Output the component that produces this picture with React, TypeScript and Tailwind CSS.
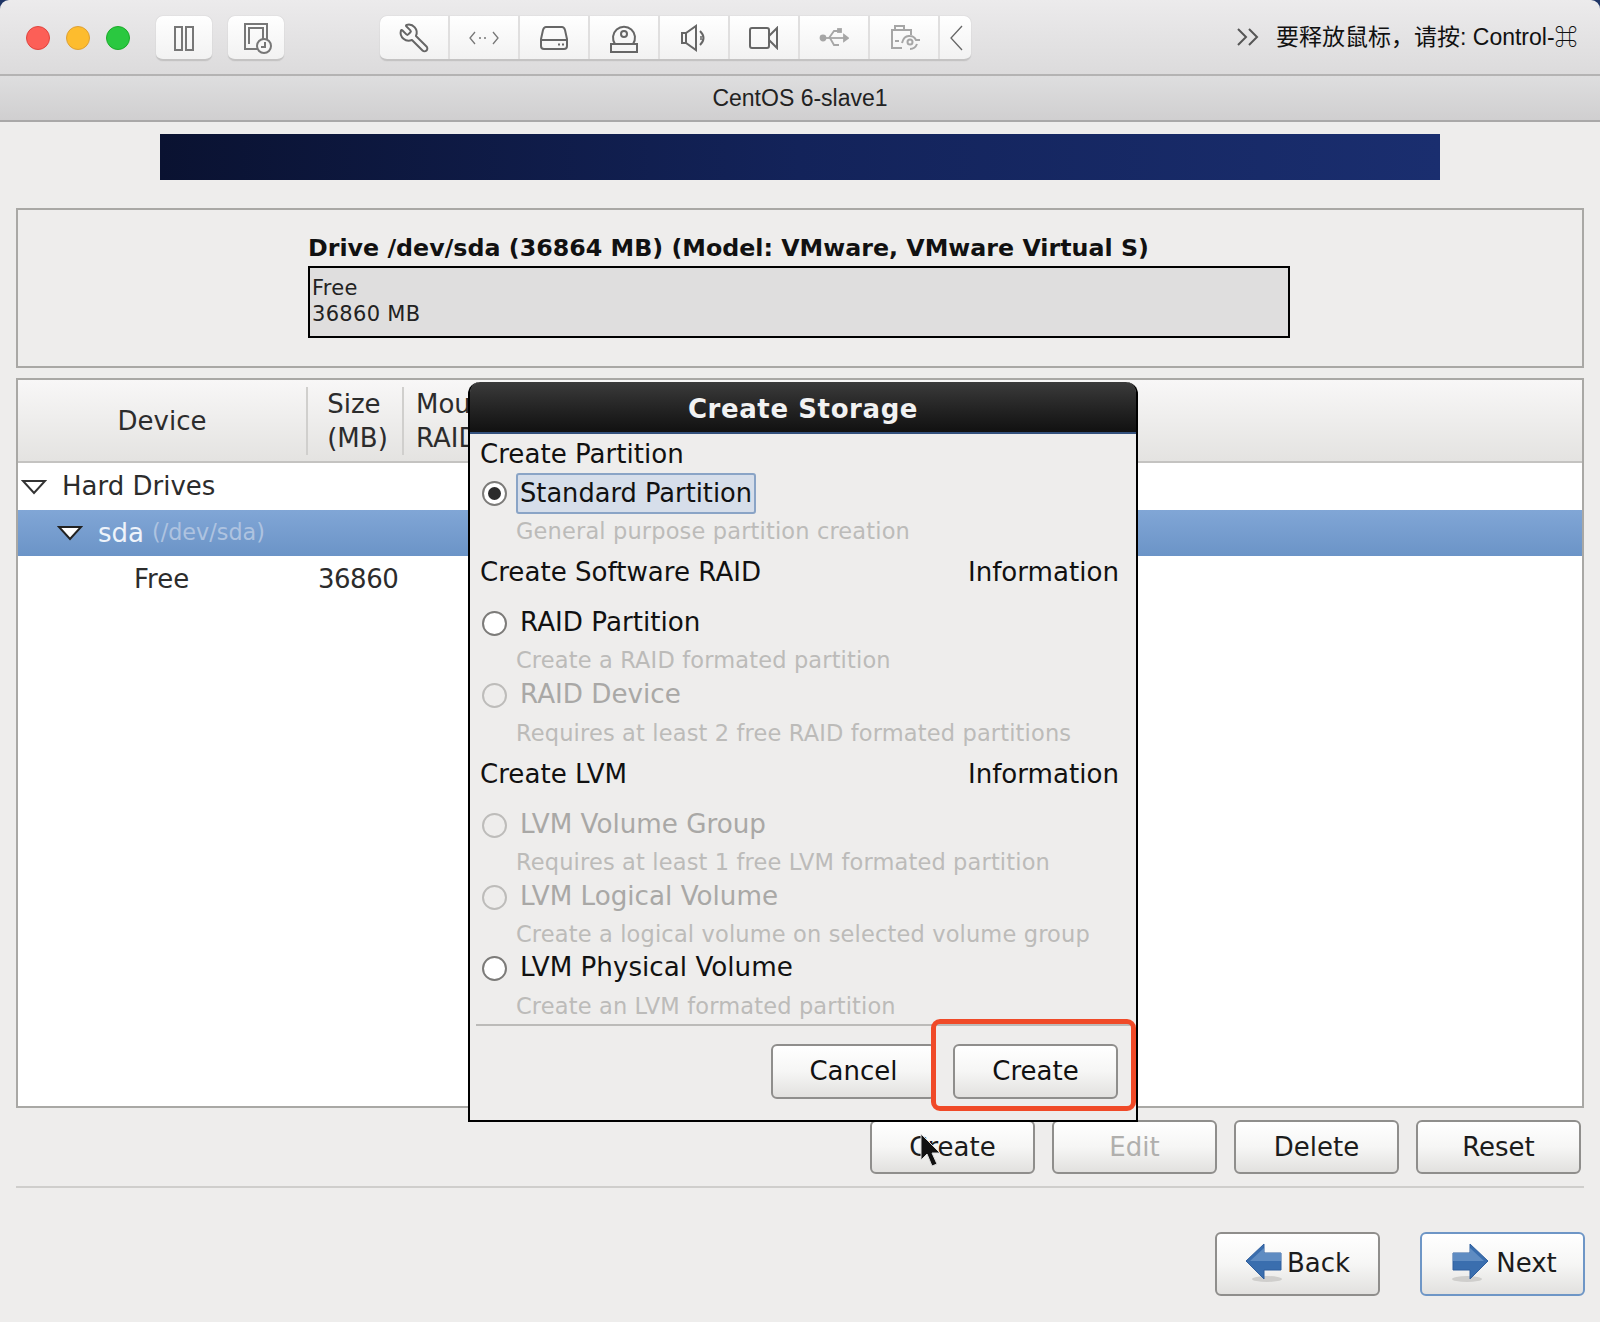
import { Wrench } from "lucide-react";
import type { ReactNode } from "react";

const sans = "font-['DejaVu_Sans',sans-serif]";

function Button({
  children,
  className = "",
  border = "border-[#8f8e8c]",
}: {
  children: ReactNode;
  className?: string;
  border?: string;
}) {
  return (
    <div
      className={`flex w-[165px] items-center justify-center rounded-[6px] border-2 ${border} bg-gradient-to-b from-white via-[#f6f6f5] to-[#e2e1df] text-[26px] text-[#1c1c1c] ${className}`}
    >
      {children}
    </div>
  );
}

function Radio({ checked, disabled }: { checked?: boolean; disabled?: boolean }) {
  return (
    <span
      className={`flex h-[25px] w-[25px] shrink-0 items-center justify-center rounded-full border-2 ${
        disabled ? "border-[#bdbcba] bg-[#eeedec]" : "border-[#7c7b79] bg-white"
      }`}
    >
      {checked && <span className="h-[13px] w-[13px] rounded-full bg-[#2b2b2b]" />}
    </span>
  );
}

function Option({ label, disabled, className }: { label: string; disabled?: boolean; className: string }) {
  return (
    <div className={`flex items-center gap-[13px] pl-[2px] ${className}`}>
      <Radio disabled={disabled} />
      <span className={`text-[26.2px] ${disabled ? "text-[#a9a8a6]" : "text-[#111]"}`}>{label}</span>
    </div>
  );
}

function Hint({ text, className }: { text: string; className: string }) {
  return <div className={`flex items-center pl-[36px] text-[22.5px] tracking-[0.15px] text-[#bcbbb9] ${className}`}>{text}</div>;
}

function Heading({ left, right, className }: { left: string; right?: string; className: string }) {
  return (
    <div className={`flex items-center justify-between pr-[17px] text-[26.1px] text-[#111] ${className}`}>
      <span>{left}</span>
      {right && <span>{right}</span>}
    </div>
  );
}

function ArrowIcon({ flip }: { flip?: boolean }) {
  return (
    <svg width="38" height="42" viewBox="0 0 38 42" className={flip ? "-scale-x-100" : ""}>
      <ellipse cx="22" cy="37" rx="15" ry="3" fill="#cfcecc" />
      <path d="M1 19 L19 2 V11 H36 V28 H19 V37 Z" fill="#3a6eae" stroke="#2f5f9e" />
      <path d="M19 11 H36 V19 H5 L19 6 Z" fill="#5f8cc2" />
    </svg>
  );
}

function ToolCell({ children, last }: { children: ReactNode; last?: boolean }) {
  return (
    <div className={`flex h-full w-[70px] items-center justify-center ${last ? "" : "border-r-2 border-[#e0dfdf]"}`}>
      {children}
    </div>
  );
}

export default function App() {
  return (
    <div className={`relative flex h-[1322px] w-[1600px] flex-col overflow-hidden bg-[#1f3566] ${sans}`}>
      {/* mac window toolbar */}
      <div className="flex h-[76px] shrink-0 items-start rounded-t-[9px] border-b-2 border-[#b4b3b3] bg-gradient-to-b from-[#ecebec] to-[#dcdbdc] pt-[16px]">
        <div className="ml-[26px] mt-[10px] flex gap-[16px]">
          <span className="h-[24px] w-[24px] rounded-full border border-[#e0443e] bg-[#fc5f57]" />
          <span className="h-[24px] w-[24px] rounded-full border border-[#dea034] bg-[#fdbc2e]" />
          <span className="h-[24px] w-[24px] rounded-full border border-[#1aab29] bg-[#2ac840]" />
        </div>
        <div className="ml-[26px] flex h-[45px] w-[56px] items-center justify-center rounded-[7px] border-b-2 border-[#c4c3c3] bg-gradient-to-b from-white to-[#f2f2f2] shadow-[0_0_1px_#aaa]">
          <svg width="24" height="26" viewBox="0 0 24 26" fill="none" stroke="#777" strokeWidth="2">
            <rect x="3" y="2" width="7" height="23" />
            <rect x="14" y="2" width="7" height="23" />
          </svg>
        </div>
        <div className="ml-[16px] flex h-[45px] w-[56px] items-center justify-center rounded-[7px] border-b-2 border-[#c4c3c3] bg-gradient-to-b from-white to-[#f2f2f2] shadow-[0_0_1px_#aaa]">
          <svg width="30" height="32" viewBox="0 0 30 32" fill="none" stroke="#777" strokeWidth="2" className="ml-[3px]">
            <path d="M14 27 H2 V2 H24 V17" />
            <path d="M6 22 V6 H20 V17" />
            <circle cx="21" cy="24" r="7" fill="#f8f8f8" />
            <path d="M22 20 V25 H18" />
          </svg>
        </div>
        <div className="ml-[96px] flex h-[45px] w-[591px] rounded-[7px] border-b-2 border-[#c4c3c3] bg-gradient-to-b from-white to-[#f2f2f2] shadow-[0_0_1px_#aaa]">
          <ToolCell>
            <Wrench size={32} color="#666" strokeWidth={1.5} className="-scale-x-100" />
          </ToolCell>
          <ToolCell>
            <svg width="32" height="16" viewBox="0 0 32 16" fill="none" stroke="#777" strokeWidth="1.3">
              <path d="M7 2 L2 8 L7 14 M25 2 L30 8 L25 14" />
              <path d="M11 8 H21" strokeDasharray="2 3" />
            </svg>
          </ToolCell>
          <ToolCell>
            <svg width="30" height="26" viewBox="0 0 30 26" fill="none" stroke="#666" strokeWidth="2">
              <path d="M7 2 H23 Q25 2 26 5 L28 14 V21 Q28 24 25 24 H5 Q2 24 2 21 V14 L4 5 Q5 2 7 2 Z M2 15 H28" />
              <path d="M19 19.5 H21 M23 19.5 H25" />
            </svg>
          </ToolCell>
          <ToolCell>
            <svg width="28" height="30" viewBox="0 0 28 30" fill="none" stroke="#666" strokeWidth="2">
              <path d="M5 21 A 11 11 0 1 1 23 21" />
              <circle cx="14" cy="11" r="3" />
              <rect x="1" y="21" width="26" height="8" />
            </svg>
          </ToolCell>
          <ToolCell>
            <svg width="28" height="28" viewBox="0 0 28 28" fill="none" stroke="#666" strokeWidth="2">
              <path d="M2 9 H6 L16 2 V26 L6 19 H2 Z" />
              <path d="M6 9 V19 M20 7 Q27 14 20 21" />
              <path d="M21 12 V16" strokeWidth="1.5" />
            </svg>
          </ToolCell>
          <ToolCell>
            <svg width="30" height="24" viewBox="0 0 30 24" fill="none" stroke="#666" strokeWidth="2">
              <rect x="1" y="2" width="19" height="20" rx="2" />
              <path d="M20 10 L28 2 V22 L20 14" />
            </svg>
          </ToolCell>
          <ToolCell>
            <svg width="30" height="22" viewBox="0 0 30 22" fill="none" stroke="#a6a6a6" strokeWidth="1.8">
              <circle cx="4" cy="11" r="2.5" fill="#a6a6a6" />
              <path d="M6 11 H26" />
              <path d="M10 11 L15 4 H19 M11 11 L15 18 H20" />
              <path d="M25 8 L29 11 L25 14 Z" fill="#a6a6a6" />
              <rect x="19" y="2" width="3" height="3" fill="#a6a6a6" />
            </svg>
          </ToolCell>
          <ToolCell>
            <svg width="32" height="28" viewBox="0 0 32 28" fill="none" stroke="#a6a6a6" strokeWidth="2" className="ml-[3px]">
              <path d="M12 24 H2 V6 H5 V2 H14 V6 H21 V11" />
              <path d="M5 6 H14" />
              <path d="M5 17 H9" />
              <circle cx="20" cy="18" r="2.5" />
              <path d="M12 19 Q14 11 20 12 Q24 12 26 16 H30 M27 20 Q25 25 20 25" />
            </svg>
          </ToolCell>
          <div className="flex h-full flex-1 items-center justify-center">
            <svg width="14" height="28" viewBox="0 0 14 28" fill="none" stroke="#666" strokeWidth="1.3">
              <path d="M13 2 L2 14 L13 26" />
            </svg>
          </div>
        </div>
        <div className="ml-[265px] mt-[4px] flex items-center">
          <svg width="24" height="20" viewBox="0 0 24 20" fill="none" stroke="#555" strokeWidth="2">
            <path d="M2 2 L10 10 L2 18 M13 2 L21 10 L13 18" />
          </svg>
          <span className="ml-[16px] font-['Liberation_Sans','Noto_Sans_CJK_SC',sans-serif] text-[23px] text-[#111] whitespace-nowrap">
            要释放鼠标，请按: Control-⌘
          </span>
        </div>
      </div>

      {/* vm title */}
      <div className="flex h-[46px] shrink-0 items-center justify-center border-b-2 border-[#a9a8a8] bg-gradient-to-b from-[#dededf] to-[#d0cfd0] font-['Liberation_Sans',sans-serif] text-[23px] text-[#222]">
        CentOS 6-slave1
      </div>

      {/* guest screen */}
      <div className="flex min-h-0 flex-1 flex-col bg-[#eeedec] px-[16px] pt-[12px]">
        <div className="mx-[144px] h-[46px] shrink-0 bg-gradient-to-r from-[#0a1231] via-[#13235a] to-[#1a2e6f]" />

        <div className="mt-[28px] flex h-[160px] shrink-0 flex-col border-2 border-[#a9a8a5] pl-[290px] pt-[22px]">
          <div className="text-[23.75px] font-bold leading-[32px] text-[#111]">
            Drive /dev/sda (36864 MB) (Model: VMware, VMware Virtual S)
          </div>
          <div className="mt-[2px] h-[72px] w-[982px] border-2 border-black bg-[#dfdede] pl-[2px] pt-[7px] text-[21px] leading-[26px] tracking-[0.3px] text-[#222]">
            <div>Free</div>
            <div>36860 MB</div>
          </div>
        </div>

        <div className="mt-[10px] flex h-[730px] shrink-0 flex-col border-2 border-[#a9a8a5] bg-white text-[26px] text-[#2c2c2c]">
          <div className="flex h-[83px] shrink-0 items-center border-b-2 border-[#c4c3c1] bg-gradient-to-b from-[#f8f7f7] to-[#e4e3e1] pt-[1px]">
            <div className="flex h-[68px] w-[290px] items-center justify-center border-r-2 border-[#d0cfcd]">Device</div>
            <div className="flex h-[68px] w-[96px] items-center justify-center border-r-2 border-[#d0cfcd] pl-[5px] leading-[34px]">
              <div>
                Size
                <br />
                (MB)
              </div>
            </div>
            <div className="pl-[12px] leading-[34px]">
              <div>Mou</div>
              <div>RAID</div>
            </div>
          </div>
          <div className="flex h-[47px] items-center">
            <svg width="26" height="16" viewBox="0 0 26 16" className="ml-[3px]">
              <path d="M2 2 H24 L13 14 Z" fill="#fff" stroke="#333" strokeWidth="2" />
            </svg>
            <span className="ml-[15px]">Hard Drives</span>
          </div>
          <div className="flex h-[46px] items-center bg-gradient-to-b from-[#81a6d6] to-[#6b94c7] text-white">
            <svg width="26" height="16" viewBox="0 0 26 16" className="ml-[39px]">
              <path d="M2 2 H24 L13 14 Z" fill="#fff" stroke="#222" strokeWidth="2" />
            </svg>
            <span className="ml-[15px] text-[#eef3fa]">sda</span>
            <span className="ml-[8px] text-[22.3px] text-[#aec3e0]">(/dev/sda)</span>
          </div>
          <div className="flex h-[46px] items-center">
            <span className="w-[300px] pl-[116px]">Free</span>
            <span className="tracking-[-0.5px]">36860</span>
          </div>
        </div>

        <div className="mt-[12px] flex h-[54px] shrink-0 justify-end gap-[17px] pr-[3px]">
          <Button>Create</Button>
          <Button>
            <span className="text-[#b0afad]">Edit</span>
          </Button>
          <Button>Delete</Button>
          <Button>Reset</Button>
        </div>
        <div className="mt-[12px] h-[2px] shrink-0 bg-[#cfcecc]" />

        <div className="mt-[44px] flex h-[64px] shrink-0 justify-end gap-[40px]">
          <Button className="gap-[4px] pb-[2px]">
            <ArrowIcon />
            Back
          </Button>
          <Button border="border-[#6e96c6]" className="-mr-[1px] gap-[7px] pb-[2px] pl-[3px]">
            <ArrowIcon flip />
            Next
          </Button>
        </div>
      </div>

      {/* modal */}
      <div className="absolute left-[468px] top-[382px] flex h-[740px] w-[670px] flex-col rounded-t-[12px] border-x-2 border-b-2 border-black bg-[#eeedec] text-[26px]">
        <div className="flex h-[52px] shrink-0 items-center justify-center rounded-t-[10px] border-b-2 border-[#33507c] bg-gradient-to-b from-[#3b3b3b] to-[#111111] pt-[4px] text-[26px] font-bold tracking-[0.6px] text-[#f2f2f2]">
          Create Storage
        </div>
        <div className="flex min-h-0 flex-1 flex-col pl-[10px] pt-[2px]">
          <Heading left="Create Partition" className="h-[38px] shrink-0" />
          <div className="flex h-[39px] shrink-0 items-center gap-[9px] pl-[2px]">
            <Radio checked />
            <span className="rounded-[3px] border-2 border-[#8aa4c6] bg-[#d6deea] px-[2px] text-[25.7px] leading-[37px] text-[#111]">
              Standard Partition
            </span>
          </div>
          <Hint text="General purpose partition creation" className="h-[38px] shrink-0" />
          <Heading left="Create Software RAID" right="Information" className="h-[44px] shrink-0" />
          <Option label="RAID Partition" className="h-[56px] shrink-0" />
          <Hint text="Create a RAID formated partition" className="h-[19px] shrink-0" />
          <Option label="RAID Device" disabled className="h-[50px] shrink-0" />
          <Hint text="Requires at least 2 free RAID formated partitions" className="h-[27px] shrink-0" />
          <Heading left="Create LVM" right="Information" className="h-[56px] shrink-0" />
          <Option label="LVM Volume Group" disabled className="h-[44px] shrink-0" />
          <Hint text="Requires at least 1 free LVM formated partition" className="h-[31px] shrink-0" />
          <Option label="LVM Logical Volume" disabled className="h-[38px] shrink-0" />
          <Hint text="Create a logical volume on selected volume group" className="h-[38px] shrink-0" />
          <Option label="LVM Physical Volume" className="h-[28px] shrink-0" />
          <Hint text="Create an LVM formated partition" className="h-[42px] shrink-0 pt-[8px]" />
          <div className="mr-[5px] -ml-[4px] h-[2px] shrink-0 bg-[#bcbbb9]" />
          <div className="mt-[18px] flex h-[55px] shrink-0 justify-end gap-[17px] pr-[18px]">
            <Button className="text-[#111]">Cancel</Button>
            <Button className="text-[#111]">Create</Button>
          </div>
        </div>
      </div>

      {/* annotation drawn on the screenshot */}
      <div className="absolute left-[931px] top-[1019px] h-[92px] w-[205px] rounded-[9px] border-[5px] border-[#f04a28]" />

      {/* mouse pointer */}
      <svg width="24" height="38" viewBox="0 0 24 38" className="absolute left-[919px] top-[1132px]">
        <path d="M2 2 V28 L8 22 L13 34 L18 32 L13 21 H21 Z" fill="#111" stroke="#ddd" strokeWidth="1" />
      </svg>
    </div>
  );
}
